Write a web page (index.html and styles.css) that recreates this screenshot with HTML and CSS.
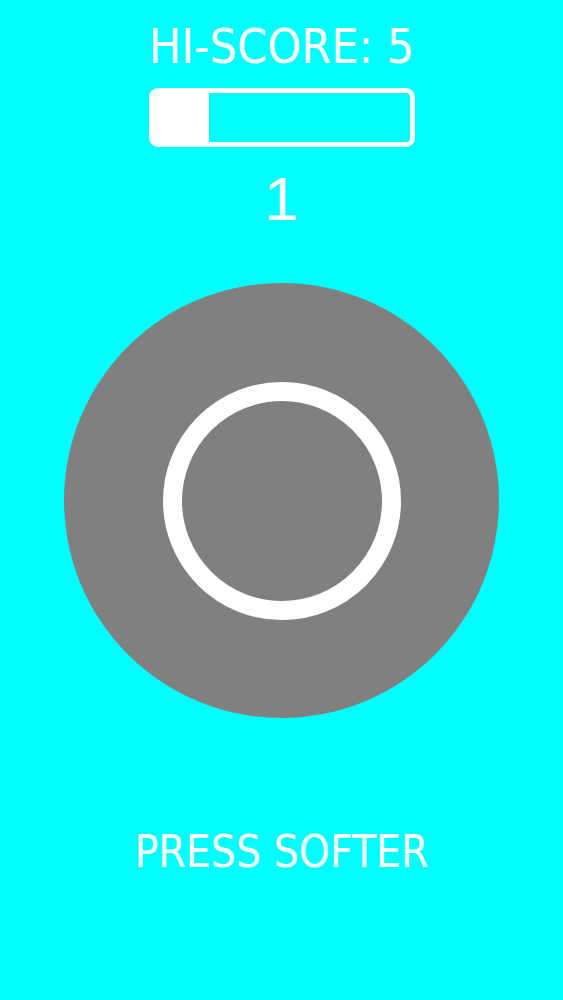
FILE: index.html
```html
<!DOCTYPE html>
<html>
<head>
<meta charset="utf-8">
<link rel="stylesheet" href="styles.css">
</head>
<body>
<div class="screen">
  <div class="hiscore">HI-SCORE: 5</div>
  <div class="bar"><div class="bar-fill"></div></div>
  <div class="score">1</div>
  <div class="pad"><div class="ring"></div></div>
  <div class="hint">PRESS SOFTER</div>
</div>
</body>
</html>
```
FILE: styles.css
```css
html, body {
  margin: 0;
  padding: 0;
  background: #00ffff;
}
.screen {
  width: 563px;
  height: 1000px;
  background: #00ffff;
  display: flex;
  flex-direction: column;
  align-items: center;
  color: #ffffff;
  font-family: "DejaVu Sans Condensed", "DejaVu Sans", sans-serif;
}
.hiscore {
  margin-top: 22px;
  font-size: 48px;
  line-height: 48px;
  height: 48px;
  white-space: nowrap;
}
.bar {
  margin-top: 18px;
  width: 266px;
  height: 59px;
  box-sizing: border-box;
  border: 5px solid #ffffff;
  border-radius: 9px;
  overflow: hidden;
  display: flex;
}
.bar-fill {
  width: 55px;
  background: #ffffff;
}
.score {
  margin-top: 22px;
  font-family: "Liberation Sans", Arial, sans-serif;
  font-size: 62px;
  line-height: 60px;
  height: 60px;
}
.pad {
  margin-top: 54px;
  width: 435px;
  height: 435px;
  border-radius: 50%;
  background: #808080;
  display: flex;
  align-items: center;
  justify-content: center;
}
.ring {
  width: 238px;
  height: 238px;
  box-sizing: border-box;
  border: 19px solid #ffffff;
  border-radius: 50%;
}
.hint {
  margin-top: 112px;
  font-size: 44px;
  line-height: 44px;
  white-space: nowrap;
}
```
